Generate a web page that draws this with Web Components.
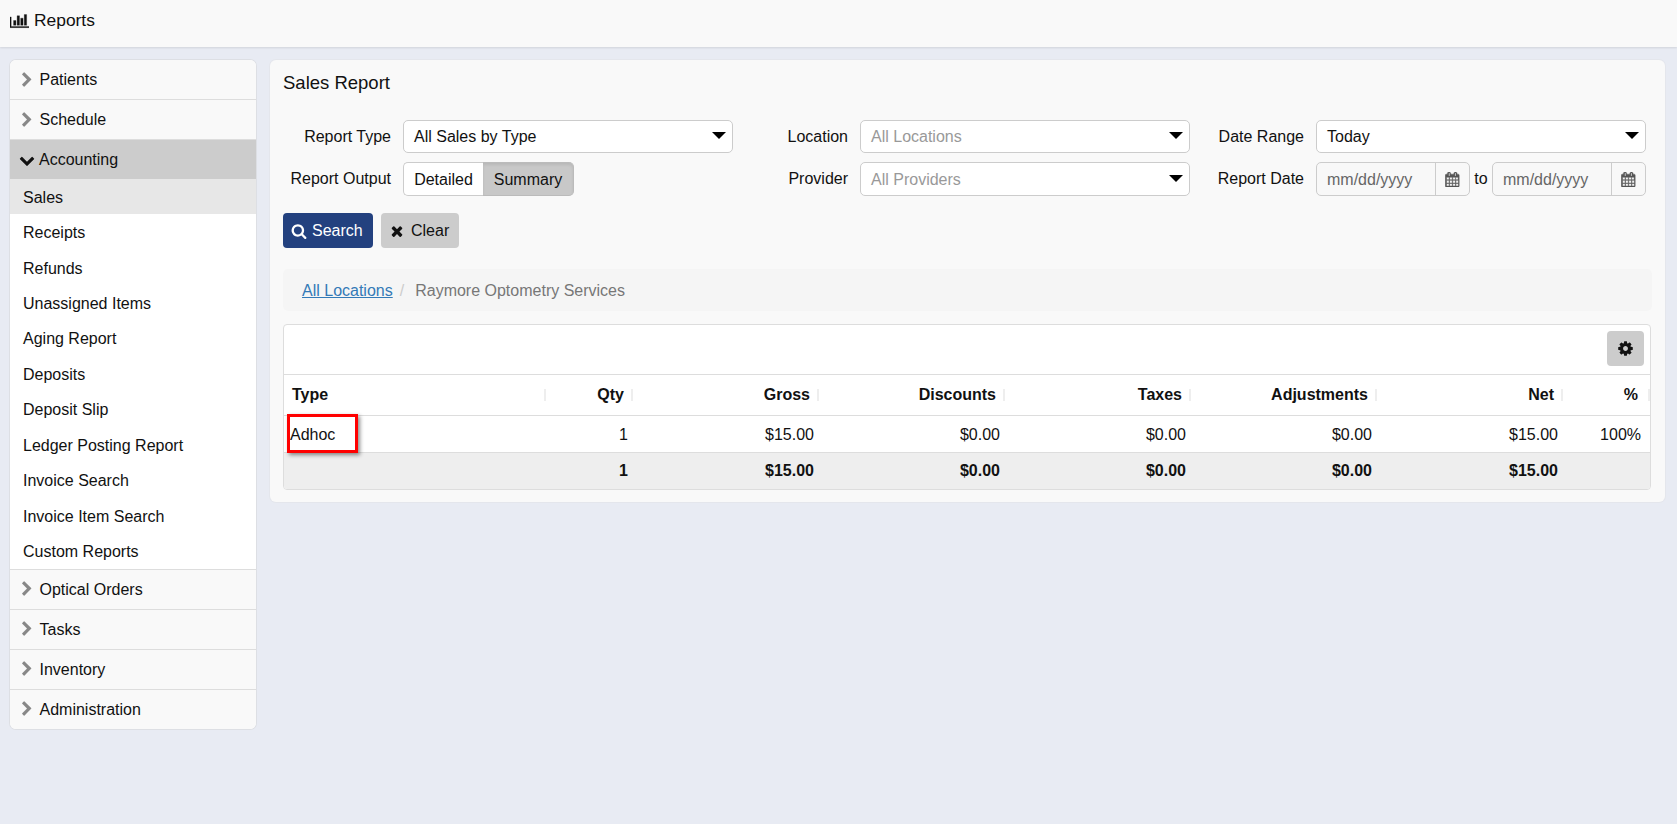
<!DOCTYPE html>
<html lang="en">
<head>
<meta charset="utf-8">
<title>Reports</title>
<style>
  html, body { height: 100%; }
  body {
    margin: 0;
    background: #e8ebf3;
    color: #111;
    font: 16px "Liberation Sans", Arial, sans-serif;
    overflow: hidden;
  }
</style>
</head>
<body>
<app-topbar>Reports</app-topbar>
<app-layout>
  <side-nav slot="side">
    <nav-group label="Patients"></nav-group>
    <nav-group label="Schedule"></nav-group>
    <nav-group label="Accounting" open>
      <nav-link active>Sales</nav-link>
      <nav-link>Receipts</nav-link>
      <nav-link>Refunds</nav-link>
      <nav-link>Unassigned Items</nav-link>
      <nav-link>Aging Report</nav-link>
      <nav-link>Deposits</nav-link>
      <nav-link>Deposit Slip</nav-link>
      <nav-link>Ledger Posting Report</nav-link>
      <nav-link>Invoice Search</nav-link>
      <nav-link>Invoice Item Search</nav-link>
      <nav-link>Custom Reports</nav-link>
    </nav-group>
    <nav-group label="Optical Orders" low></nav-group>
    <nav-group label="Tasks" low></nav-group>
    <nav-group label="Inventory" low></nav-group>
    <nav-group label="Administration" low last></nav-group>
  </side-nav>
  <report-panel title-text="Sales Report">
    <report-filters></report-filters>
    <report-breadcrumb></report-breadcrumb>
    <report-table></report-table>
  </report-panel>
</app-layout>

<script>
/*
 * Font Awesome style icon paths.
 */
const ICONS = {
  chart: ['0 0 2048 1792', 'M640 896v512h-256v-512h256zm384-512v1024h-256v-1024h256zm1024 1152v128h-2048v-1152h128v1024h1920zm-640-896v768h-256v-768h256zm384-384v1152h-256v-1152h256z'],
  right: ['0 0 1792 1792', 'M1363 877l-742 742q-19 19-45 19t-45-19l-166-166q-19-19-19-45t19-45l531-531-531-531q-19-19-19-45t19-45l166-166q19-19 45-19t45 19l742 742q19 19 19 45t-19 45z'],
  down: ['0 0 1792 1792', 'M1683 808l-742 741q-19 19-45 19t-45-19l-742-741q-19-19-19-45.5t19-45.5l166-165q19-19 45-19t45 19l531 531 531-531q19-19 45-19t45 19l166 165q19 19 19 45.5t-19 45.5z'],
  search: ['0 0 1792 1792', 'M1216 832q0-185-131.500-316.500t-316.500-131.500-316.500 131.500-131.500 316.500 131.500 316.500 316.500 131.500 316.500-131.500 131.500-316.500zm512 832q0 52-38 90t-90 38q-54 0-90-38l-343-342q-179 124-399 124-143 0-273.500-55.500t-225-150-150-225-55.500-273.500 55.500-273.500 150-225 225-150 273.500-55.500 273.500 55.500 225 150 150 225 55.500 273.500q0 220-124 399l343 343q37 37 37 90z'],
  times: ['0 0 1792 1792', 'M1490 1322q0 40-28 68l-136 136q-28 28-68 28t-68-28l-294-294-294 294q-28 28-68 28t-68-28l-136-136q-28-28-28-68t28-68l294-294-294-294q-28-28-28-68t28-68l136-136q28-28 68-28t68 28l294 294 294-294q28-28 68-28t68 28l136 136q28 28 28 68t-28 68l-294 294 294 294q28 28 28 68z'],
  cog: ['0 0 1792 1792', 'M1152 896q0-106-75-181t-181-75-181 75-75 181 75 181 181 75 181-75 75-181zm512-109v222q0 12-8 23t-20 13l-185 28q-19 54-39 91 35 50 107 138 10 12 10 25t-9 23q-27 37-99 108t-94 71q-12 0-26-9l-138-108q-44 23-91 38-16 136-29 186-7 28-36 28h-222q-14 0-24.500-8.500t-11.500-21.500l-28-184q-49-16-90-37l-141 107q-10 9-25 9-14 0-25-11-126-114-165-168-7-10-7-23 0-12 8-23 15-21 51-66.500t54-70.500q-27-50-41-99l-183-27q-13-2-21-12.500t-8-23.500v-222q0-12 8-23t19-13l186-28q14-46 39-92-40-57-107-138-10-12-10-24 0-10 9-23 26-36 98.500-107.500t94.500-71.500q13 0 26 10l138 107q44-23 91-38 16-136 29-186 7-28 36-28h222q14 0 24.500 8.500t11.500 21.500l28 184q49 16 90 37l142-107q9-9 24-9 13 0 25 10 129 119 165 170 7 8 7 22 0 12-8 23-15 21-51 66.500t-54 70.500q26 50 41 98l183 28q13 2 21 12.500t8 23.500z'],
  calendar: ['0 0 1792 1792', 'M192 1664h288v-288h-288v288zm352 0h320v-288h-320v288zm-352-352h288v-320h-288v320zm352 0h320v-320h-320v320zm-352-384h288v-288h-288v288zm736 736h320v-288h-320v288zm-384-736h320v-288h-320v288zm768 736h288v-288h-288v288zm-384-352h320v-320h-320v320zm-352-864v-288q0-13-9.500-22.500t-22.500-9.500h-64q-13 0-22.500 9.500t-9.500 22.500v288q0 13 9.500 22.500t22.500 9.500h64q13 0 22.500-9.500t9.500-22.500zm736 864h288v-320h-288v320zm-384-384h320v-288h-320v288zm352 0h288v-288h-288v288zm32-480v-288q0-13-9.500-22.500t-22.500-9.500h-64q-13 0-22.500 9.500t-9.500 22.500v288q0 13 9.500 22.500t22.500 9.500h64q13 0 22.500-9.500t9.500-22.500zm384-64v1280q0 52-38 90t-90 38h-1408q-52 0-90-38t-38-90v-1280q0-52 38-90t90-38h128v-96q0-66 47-113t113-47h64q66 0 113 47t47 113v96h384v-96q0-66 47-113t113-47h64q66 0 113 47t47 113v96h128q52 0 90 38t38 90z']
}

/**
 * Builds a custom element class from a piece of shadow markup.
 *
 * @param {string} html - The shadow root's markup.
 * @returns {Function} The element class.
 */
const simple = html => class extends HTMLElement {
  constructor () {
    super()
    this.attachShadow({ mode: 'open' }).innerHTML = html
  }
}

/*
 * An inline svg icon.
 */
customElements.define('app-icon', class extends HTMLElement {
  constructor () {
    super()
    this.attachShadow({ mode: 'open' })
  }

  connectedCallback () {
    const [box, d] = ICONS[this.getAttribute('name')]
    const size = this.getAttribute('size') || 14
    const stroke = this.getAttribute('stroke') || 0
    this.shadowRoot.innerHTML = `
      <style>
        :host { display: inline-flex; flex: none; color: inherit; }
        svg { display: block; fill: currentColor; stroke: currentColor; stroke-width: ${stroke}; }
      </style>
      <svg width="${size}" height="${size}" viewBox="${box}"><path d="${d}"/></svg>`
  }
})

customElements.define('app-topbar', simple(`
  <style>
    :host {
      display: flex;
      align-items: center;
      gap: 5px;
      box-sizing: border-box;
      height: 47px;
      padding: 0 0 6px 10px;
      background: #f9f9f9;
      box-shadow: 0 1px 2px rgba(0, 0, 0, .1);
      font-size: 17.4px;
    }
  </style>
  <app-icon name="chart" size="19" stroke="30"></app-icon>
  <slot></slot>
`))

customElements.define('app-layout', simple(`
  <style>
    :host {
      display: flex;
      align-items: flex-start;
      gap: 14px;
      padding: 13px 12px 0 10px;
    }
  </style>
  <slot name="side"></slot>
  <slot></slot>
`))

customElements.define('side-nav', simple(`
  <style>
    :host {
      display: block;
      flex: none;
      width: 246px;
      box-sizing: border-box;
      background: #fff;
      border-radius: 6px;
      box-shadow: 0 0 0 1px #dddfe4;
      overflow: hidden;
    }
  </style>
  <slot></slot>
`))

/*
 * An accordion section of the side menu.
 */
customElements.define('nav-group', class extends HTMLElement {
  constructor () {
    super()
    this.attachShadow({ mode: 'open' })
  }

  connectedCallback () {
    const open = this.hasAttribute('open')
    this.shadowRoot.innerHTML = `
      <style>
        :host { display: block; }
        .head {
          display: flex;
          align-items: center;
          box-sizing: border-box;
          height: 40px;
          padding-left: 9px;
          gap: ${open ? '4px' : '4.500px'};
          background: #f9f9f9;
          border-bottom: 1px solid #ddd;
          color: #111;
        }
        :host([open]) .head { height: 39px; background: #ccc; border-bottom: 0; }
        :host([last]) .head { height: 39px; border-bottom: 0; }
        :host([low]) span { position: relative; top: 1px; }
        .items { border-bottom: 1px solid #ddd; }
        app-icon { color: ${open ? '#111' : '#888'}; }
      </style>
      <div class="head">
        <app-icon name="${open ? 'down' : 'right'}" size="16"></app-icon>
        <span>${this.getAttribute('label')}</span>
      </div>
      ${open ? '<div class="items"><slot></slot></div>' : ''}`
  }
})

customElements.define('nav-link', simple(`
  <style>
    :host {
      display: flex;
      align-items: center;
      box-sizing: border-box;
      height: 35.45px;
      padding: 2px 0 0 13px;
      background: #fff;
    }
    :host([active]) { background: #e7e7e7; }
  </style>
  <slot></slot>
`))

customElements.define('report-panel', class extends HTMLElement {
  constructor () {
    super()
    this.attachShadow({ mode: 'open' })
  }

  connectedCallback () {
    this.shadowRoot.innerHTML = `
      <style>
        :host {
          display: block;
          flex: 1;
          box-sizing: border-box;
          height: 442px;
          padding: 12px 13px 0;
          background: #f9f9f9;
          border-radius: 6px;
          box-shadow: 0 0 0 1px #e4e6ec;
        }
        h1 { margin: 0 0 26px; font-size: 18.5px; line-height: 22px; font-weight: 400; }
      </style>
      <h1>${this.getAttribute('title-text')}</h1>
      <slot></slot>`
  }
})

/*
 * A select look-alike with a black caret.
 */
customElements.define('form-select', class extends HTMLElement {
  constructor () {
    super()
    this.attachShadow({ mode: 'open' }).innerHTML = `
      <style>
        :host {
          display: flex;
          align-items: center;
          justify-content: space-between;
          box-sizing: border-box;
          padding: 0 6px 0 10px;
          background: #fff;
          border: 1px solid #ccc;
          border-radius: 5px;
        }
        :host([placeholder]) { color: #999; }
        :host([low]) span { position: relative; top: 1px; }
        i {
          width: 0;
          height: 0;
          margin-bottom: 2px;
          border: 7px solid transparent;
          border-top: 7px solid #000;
          border-bottom: 0;
        }
      </style>
      <span><slot></slot></span><i></i>`
  }
})

customElements.define('date-field', simple(`
  <style>
    :host {
      display: flex;
      box-sizing: border-box;
      flex: 1;
      background: #f8f8f8;
      border: 1px solid #ccc;
      border-radius: 5px;
      color: #666;
    }
    span { flex: 1; padding: 2px 0 0 10px; align-self: center; }
    b {
      display: flex;
      align-items: center;
      justify-content: center;
      width: 33px;
      border-left: 1px solid #ccc;
      color: #555;
    }
  </style>
  <span>mm/dd/yyyy</span>
  <b><app-icon name="calendar" size="15" stroke="50"></app-icon></b>
`))

customElements.define('report-filters', simple(`
  <style>
    :host { display: block; }
    .grid {
      display: grid;
      grid-template-columns: 108px 330px 103px 330px 102px 330px;
      grid-template-rows: 33px 34px;
      gap: 9px 12px;
    }
    label { align-self: center; text-align: right; white-space: nowrap; }
    .seg { display: flex; width: 171px; }
    .seg span {
      display: flex;
      align-items: center;
      justify-content: center;
      box-sizing: border-box;
      padding-top: 2px;
    }
    .seg .off {
      width: 80px;
      background: #fff;
      border: 1px solid #ccc;
      border-right: 0;
      border-radius: 5px 0 0 5px;
    }
    .seg .on {
      width: 91px;
      background: #c8c8c8;
      border: 1px solid #bbb;
      border-left: 0;
      border-radius: 0 5px 5px 0;
      box-shadow: inset 0 2px 3px rgba(0, 0, 0, .08);
    }
    .dates { display: flex; align-items: stretch; }
    .dates em { width: 22px; font-style: normal; text-align: center; align-self: center; }
    .btns { display: flex; gap: 8px; margin: 17px 0 21px; }
    button {
      display: flex;
      align-items: center;
      gap: 5px;
      height: 35px;
      padding: 0 8px;
      border: 0;
      border-radius: 4px;
      font: inherit;
    }
    .primary { width: 90px; background: #23417f; color: #fff; }
    .neutral { width: 78px; gap: 6px; background: #ccc; color: #111; }
  </style>
  <div class="grid">
    <label>Report Type</label>
    <form-select>All Sales by Type</form-select>
    <label>Location</label>
    <form-select placeholder>All Locations</form-select>
    <label>Date Range</label>
    <form-select>Today</form-select>
    <label>Report Output</label>
    <div class="seg"><span class="off">Detailed</span><span class="on">Summary</span></div>
    <label>Provider</label>
    <form-select placeholder low>All Providers</form-select>
    <label>Report Date</label>
    <div class="dates"><date-field></date-field><em>to</em><date-field></date-field></div>
  </div>
  <div class="btns">
    <button class="primary"><app-icon name="search" size="16"></app-icon>Search</button>
    <button class="neutral"><app-icon name="times" size="16"></app-icon>Clear</button>
  </div>
`))

customElements.define('report-breadcrumb', simple(`
  <style>
    :host {
      display: flex;
      align-items: center;
      box-sizing: border-box;
      height: 42px;
      margin-bottom: 13px;
      padding: 2px 0 0 19px;
      background: #f5f5f5;
      border-radius: 5px;
      color: #777;
    }
    a { color: #337ab7; text-decoration: underline; }
    i { margin: 0 11px 0 7px; font-style: normal; color: #ccc; }
  </style>
  <a>All Locations</a><i>/</i><span>Raymore Optometry Services</span>
`))

customElements.define('report-table', simple(`
  <style>
    :host {
      display: block;
      box-sizing: border-box;
      width: 1368px;
      background: #fff;
      border: 1px solid #ddd;
      border-radius: 4px;
      overflow: hidden;
    }
    .tools {
      display: flex;
      justify-content: flex-end;
      align-items: center;
      box-sizing: border-box;
      height: 49px;
      padding: 0 6px 3px 0;
    }
    .gear {
      display: flex;
      align-items: center;
      justify-content: center;
      width: 37px;
      height: 35px;
      background: #ccc;
      border-radius: 4px;
    }
    table {
      width: 100%;
      table-layout: fixed;
      border-collapse: collapse;
    }
    th, td {
      padding: 0 5px 0 0;
      text-align: right;
      border-top: 1px solid #ddd;
    }
    th {
      position: relative;
      height: 40px;
      padding-right: 9px;
      font-weight: 700;
    }
    th::after {
      content: "";
      position: absolute;
      right: 0;
      top: 14px;
      height: 12px;
      border-right: 2px solid #eee;
    }
    th:first-child { text-align: left; padding-left: 8px; }
    td:first-child { text-align: left; padding-left: 7px; }
    th:last-child { padding-right: 12px; }
    td:last-child { padding-right: 9px; }
    td { height: 36px; }
    tbody td { height: 34px; padding-top: 2px; }
    tfoot td { background: #eee; font-weight: 700; }
    .mark { position: relative; }
    .mark span { position: relative; left: -1px; }
    .mark::after {
      content: "";
      position: absolute;
      left: 3px;
      top: -2px;
      width: 65px;
      height: 33px;
      border: 3px solid #f00;
      box-shadow: 2px 2px 4px rgba(0, 0, 0, .45);
    }
  </style>
  <div class="tools">
    <div class="gear"><app-icon name="cog" size="17"></app-icon></div>
  </div>
  <table>
    <colgroup>
      <col style="width:262px"><col style="width:87px"><col style="width:186px"><col style="width:186px">
      <col style="width:186px"><col style="width:186px"><col style="width:186px"><col>
    </colgroup>
    <thead>
      <tr><th>Type</th><th>Qty</th><th>Gross</th><th>Discounts</th><th>Taxes</th><th>Adjustments</th><th>Net</th><th>%</th></tr>
    </thead>
    <tbody>
      <tr><td class="mark"><span>Adhoc</span></td><td>1</td><td>$15.00</td><td>$0.00</td><td>$0.00</td><td>$0.00</td><td>$15.00</td><td>100%</td></tr>
    </tbody>
    <tfoot>
      <tr><td></td><td>1</td><td>$15.00</td><td>$0.00</td><td>$0.00</td><td>$0.00</td><td>$15.00</td><td></td></tr>
    </tfoot>
  </table>
`))
</script>
</body>
</html>
